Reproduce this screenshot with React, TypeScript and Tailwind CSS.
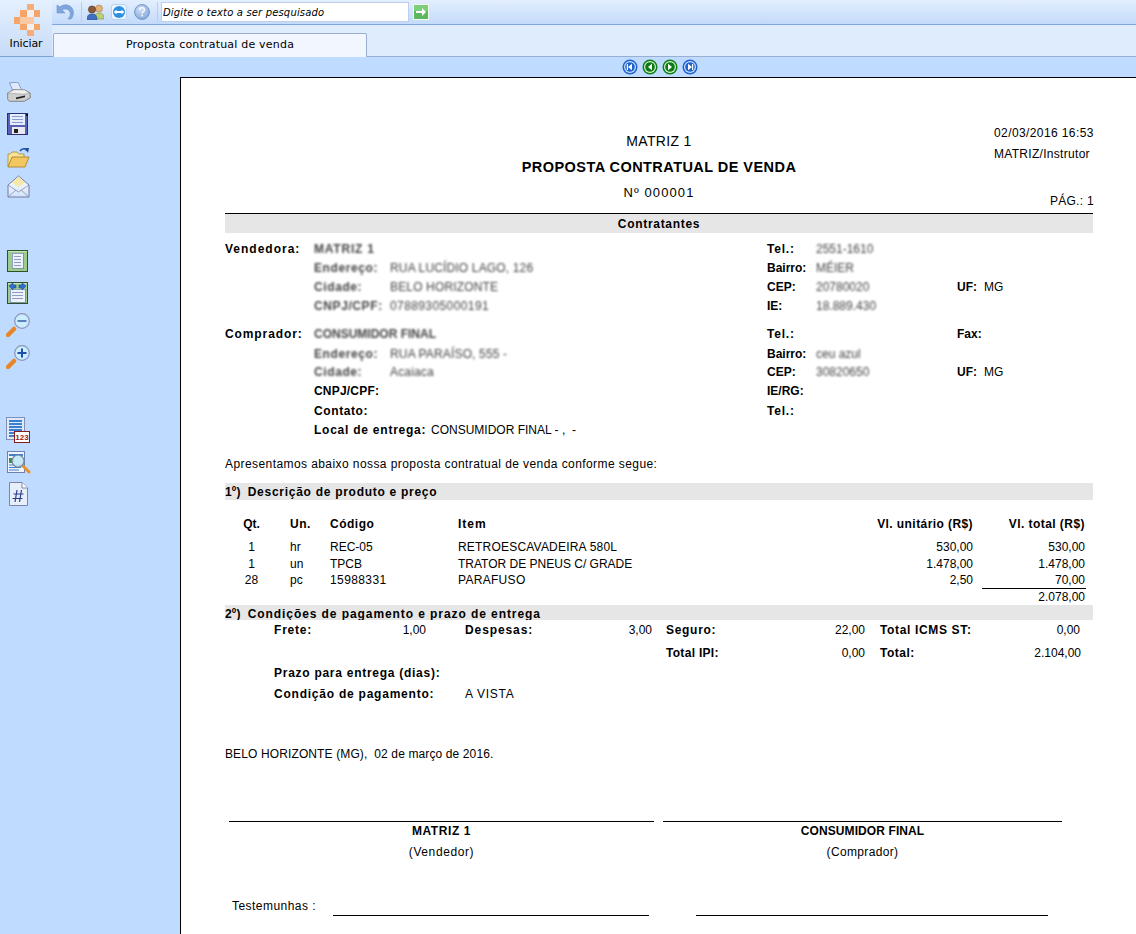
import React from "react";

const F = "[font-family:'Liberation_Sans',Arial,sans-serif]";

function Blur({ children, className = "" }: { children: React.ReactNode; className?: string }) {
  return <span className={`blur-[1px] text-[#444] whitespace-nowrap ${className}`}>{children}</span>;
}

const Logo = () => (
  <svg width="26" height="32" viewBox="0 0 26 32" shapeRendering="crispEdges">
    <g fill="#f6a468">
      <rect x="13" y="0" width="7" height="6" fill="#f8ad78" />
      <rect x="6" y="6" width="7" height="7" />
      <rect x="20" y="6" width="6" height="7" />
      <rect x="0" y="13" width="6" height="7" />
      <rect x="6" y="20" width="7" height="6" />
      <rect x="20" y="20" width="6" height="6" />
      <rect x="13" y="26" width="7" height="6" fill="#f8ad78" />
    </g>
    <g fill="#fbe1cd">
      <rect x="13" y="6" width="7" height="7" fill="#eef0f2" />
      <rect x="6" y="13" width="14" height="7" fill="#f9c9a6" />
      <rect x="13" y="20" width="7" height="6" fill="#eef0f2" />
    </g>
  </svg>
);

const Undo = () => (
  <svg width="18" height="18" viewBox="0 0 18 18">
    <path d="M1 2v8h8L6 7c3-2 7-1 8 2 1 2 0 5-2 7h3c3-3 3-8 1-11-3-4-9-4-12-1z" fill="#7ea6dc" stroke="#6d95cf" strokeWidth=".6" />
  </svg>
);
const People = () => (
  <svg width="17" height="16" viewBox="0 0 17 16">
    <circle cx="12" cy="4.5" r="3.5" fill="#e2b27a" stroke="#a67c3f" strokeWidth=".6" />
    <path d="M7 15c0-5 2-6 5-6s5 1 5 6z" fill="#b9cf72" stroke="#81964a" strokeWidth=".6" />
    <circle cx="5" cy="5.500" r="3.600" fill="#8a5a3a" stroke="#4b3424" strokeWidth=".6" />
    <path d="M0 16c0-5 2-6 5-6s5 1 5 6z" fill="#3e6fc0" stroke="#2a4a86" strokeWidth=".6" />
  </svg>
);
const TV = () => (
  <svg width="16" height="16" viewBox="0 0 16 16">
    <rect x=".5" y=".5" width="15" height="15" rx="2.5" fill="#eef6ff" stroke="#b5d2f2" />
    <circle cx="8" cy="8" r="6" fill="#2d8fe0" />
    <rect x="3.500" y="7" width="9" height="2" fill="#fff" />
    <path d="M3 8l2.500-2.500v5zM13 8l-2.500-2.500v5z" fill="#fff" />
  </svg>
);
const Help = () => (
  <svg width="16" height="16" viewBox="0 0 16 16">
    <defs>
      <radialGradient id="hg" cx=".4" cy=".3" r=".8">
        <stop offset="0" stopColor="#cfe0f6" />
        <stop offset="1" stopColor="#7ea3d8" />
      </radialGradient>
    </defs>
    <circle cx="8" cy="8" r="7.400" fill="url(#hg)" stroke="#6f94c8" />
    <path d="M5.700 6c0-3 4.800-3 4.800-.2 0 1.800-2.300 1.800-2.300 3.700" fill="none" stroke="#fff" strokeWidth="1.300" />
    <rect x="7.500" y="10.800" width="1.500" height="1.600" fill="#fff" />
  </svg>
);
const Go = () => (
  <svg width="16" height="16" viewBox="0 0 16 16" shapeRendering="crispEdges">
    <rect width="16" height="16" fill="#f2f8ee" />
    <rect x="1" y="1" width="14" height="14" fill="#5cb85c" />
    <rect x="1" y="1" width="14" height="6" fill="#7fcf7a" />
    <path d="M3 7h6V4l4 4-4 4V9H3z" fill="#fff" shapeRendering="auto" />
  </svg>
);

const Nav = ({ color, dir, bar }: { color: "blue" | "green"; dir: "l" | "r"; bar?: boolean }) => {
  const o = color === "blue" ? "#1f5fd0" : "#0f7d16";
  const i = color === "blue" ? "#1f63cc" : "#0d7a14";
  const ring = color === "blue" ? "#cfe4ff" : "#d9f2d2";
  return (
    <svg width="16" height="16" viewBox="0 0 16 16">
      <circle cx="8" cy="8" r="7.500" fill={o} />
      <circle cx="8" cy="8" r="6" fill={ring} />
      <circle cx="8" cy="8" r="4.800" fill={i} />
      {dir === "l" ? <path d="M10 4.800v6.400L6 8z" fill="#fff" /> : <path d="M6 4.800v6.400L10 8z" fill="#fff" />}
      {bar && <rect x={dir === "l" ? 4.800 : 10} y="5" width="1.200" height="6" fill="#fff" />}
    </svg>
  );
};

const Printer = () => (
  <svg width="24" height="20" viewBox="0 0 24 20">
    <path d="M2.500.800L11 .3 15 8.500 6 9z" fill="#dfeafb" stroke="#7f96bd" strokeWidth=".9" />
    <path d="M.7 11l6-3.500 10.500.3 6 3.200v5l-6 3.300H2.500L.7 17.500z" fill="#cfcfcf" stroke="#6f6f6f" strokeWidth=".8" />
    <path d="M.7 11l16 1.200 6-1-5.500-3.400H7z" fill="#f1f1f1" stroke="#888" strokeWidth=".5" />
    <path d="M9 15.500l9-2v1.800l-9 2z" fill="#222" />
  </svg>
);
const Save = () => (
  <svg width="22" height="22" viewBox="0 0 22 22" shapeRendering="crispEdges">
    <rect x=".5" y=".5" width="20" height="21" fill="#5a5fb8" stroke="#2c2f7a" />
    <rect x="3" y="1" width="15" height="11" fill="#e4eefc" />
    <rect x="5" y="3" width="11" height="1" fill="#8a9ad0" />
    <rect x="5" y="6" width="11" height="1" fill="#8a9ad0" />
    <rect x="5" y="9" width="11" height="1" fill="#8a9ad0" />
    <rect x="5" y="14" width="13" height="7" fill="#e8e8ee" />
    <rect x="7" y="16" width="4" height="4" fill="#222" />
    <rect x="19" y="1" width="2" height="2" fill="#111" />
  </svg>
);
const Folder = () => (
  <svg width="23" height="21" viewBox="0 0 23 21">
    <path d="M1 20V7h2l2-2h5l2 2h5v3" fill="#f7e398" stroke="#a98a2a" strokeWidth=".8" />
    <path d="M1 20l4-10h17l-4 10z" fill="#f3c75f" stroke="#a37c1d" strokeWidth=".8" />
    <path d="M13 4c2-3 6-3 7 0" fill="none" stroke="#1f4fa8" strokeWidth="1.500" />
    <path d="M18 1l4 0-1 5z" fill="#1f4fa8" />
  </svg>
);
const Mail = () => (
  <svg width="23" height="23" viewBox="0 0 23 23">
    <defs>
      <linearGradient id="mg" x1="0" y1="0" x2="0" y2="1">
        <stop offset="0" stopColor="#ffffff" />
        <stop offset="1" stopColor="#cfe3f8" />
      </linearGradient>
    </defs>
    <path d="M1 10L11.500 1 22 10v12H1z" fill="url(#mg)" stroke="#7779a8" strokeWidth="1" />
    <path d="M5 7.500l6.500-5.500L18 7.500l-6.500 4.500z" fill="#f5e9a8" />
    <path d="M1 10l10.500 7L22 10M1 22l8-7M22 22l-8-7" fill="none" stroke="#8a8cb6" strokeWidth=".8" />
  </svg>
);
const GreenDoc = ({ arrows }: { arrows?: boolean }) => (
  <svg width="21" height="22" viewBox="0 0 21 22" shapeRendering="crispEdges">
    <rect x=".5" y=".5" width="20" height="21" fill="#9ccb8c" stroke="#2f4f2f" />
    <rect x="1" y="1" width="19" height="1" fill="#c6e3ba" />
    <rect x={arrows ? 3 : 5} y={arrows ? 7 : 3} width={arrows ? 15 : 11} height={arrows ? 13 : 15} fill="#eef2fa" stroke="#6a7fa8" strokeWidth=".7" />
    {(arrows ? [10, 13, 16] : [6, 9, 12, 15]).map((y) => (
      <rect key={y} x={arrows ? 5 : 7} y={y} width={arrows ? 11 : 7} height="1" fill="#8c9cc0" />
    ))}
    {arrows && (
      <g shapeRendering="auto">
        <path d="M2 4l4-3v2h3v3H6v2z" fill="#2f6fd0" stroke="#15408a" strokeWidth=".5" />
        <path d="M19 4l-4-3v2h-3v3h3v2z" fill="#2f6fd0" stroke="#15408a" strokeWidth=".5" />
      </g>
    )}
  </svg>
);
const Zoom = ({ plus }: { plus?: boolean }) => (
  <svg width="25" height="24" viewBox="0 0 25 24">
    <path d="M2 22l6-6" stroke="#e8862a" strokeWidth="4.500" strokeLinecap="round" />
    <circle cx="16" cy="8" r="7.300" fill="#cbeeff" stroke="#8d93b8" strokeWidth="1.200" />
    <rect x="11.500" y="7" width="9" height="2" fill={plus ? "#1f4fa8" : "#5b7fb8"} />
    {plus && <rect x="15" y="3.500" width="2" height="9" fill="#1f4fa8" />}
  </svg>
);
const Num = () => (
  <svg width="24" height="26" viewBox="0 0 24 26" shapeRendering="crispEdges">
    <rect x=".5" y=".5" width="18" height="22" fill="#dfe9f8" stroke="#7f8fb8" />
    {[3, 6, 9, 12, 15, 18].map((y) => (
      <rect key={y} x="3" y={y} width="13" height="1.500" fill="#3a80d0" />
    ))}
    <rect x="8.500" y="14.500" width="15" height="11" fill="#fff" stroke="#8b1a1a" />
    <text x="16" y="23" textAnchor="middle" fontSize="8" fontWeight="700" fill="#a01818" fontFamily="Liberation Sans">123</text>
  </svg>
);
const Preview = () => (
  <svg width="24" height="23" viewBox="0 0 24 23">
    <rect x=".5" y=".5" width="17" height="21" fill="#f0f5fd" stroke="#6f7fb0" />
    <rect x="2" y="3" width="14" height="2" fill="#3a80d0" />
    <rect x="2" y="7" width="5" height="5" fill="#3a9040" />
    <path d="M2 14h12M2 16.500h12M2 19h10" stroke="#3a80d0" strokeWidth="1" />
    <path d="M15 14l7 7" stroke="#e8922c" strokeWidth="3" strokeLinecap="round" />
    <circle cx="11" cy="10" r="6" fill="#bfe8f6" fillOpacity=".9" stroke="#7a8a9a" strokeWidth="1.200" />
  </svg>
);
const Hash = () => (
  <svg width="19" height="24" viewBox="0 0 19 24">
    <path d="M.5.500H13L18.500 6v17.500H.5z" fill="#e6effa" stroke="#7a86a8" />
    <path d="M13 .5V6h5.500" fill="#fff" stroke="#7a86a8" />
    <path d="M8 8L6 20M12.500 8l-2 12M4.500 12h10M3.500 16.500h10" stroke="#2a3f8f" strokeWidth="1.200" fill="none" />
  </svg>
);

const COLS = "grid grid-cols-[89px_76px_377px_49px_141px_27px_1fr]";

function PartyRow({ h, a, b, c, d, e, f, aTrack }: { h: string; a?: React.ReactNode; b?: React.ReactNode; c?: React.ReactNode; d?: React.ReactNode; e?: React.ReactNode; f?: React.ReactNode; aTrack?: string }) {
  return (
    <div className={`${COLS} items-center ${h}`}>
      <span className={`font-bold ${aTrack ?? ""}`}>{a}</span>
      <span className="col-span-2 flex whitespace-nowrap">{b}</span>
      <span className="font-bold whitespace-nowrap">{c}</span>
      <span className="whitespace-nowrap">{d}</span>
      <span className="font-bold whitespace-nowrap">{e}</span>
      <span className="whitespace-nowrap">{f}</span>
    </div>
  );
}

const Tel = () => <span className="tracking-[0.8px]">Tel.:</span>;

const Pair = ({ k, v, track }: { k: string; v?: string; track?: string }) => (
  <>
    <span className="w-[76px] inline-block">
      <Blur className="font-bold tracking-[0.6px]">{k}</Blur>
    </span>
    {v && <Blur className={track ?? "tracking-[0.15px]"}>{v}</Blur>}
  </>
);

const PROD = "grid grid-cols-[18px_17px_30px_40px_128px_342px_173px_112px] items-center";

function ProdRow({ h, q, u, c, i, v, t, track, itemTrack }: { h: string; q: string; u: string; c: string; i: string; v: string; t: string; track?: string; itemTrack?: string }) {
  return (
    <div className={`${PROD} ${h}`}>
      <span />
      <span className="text-center">{q}</span>
      <span />
      <span>{u}</span>
      <span className={track}>{c}</span>
      <span className={itemTrack}>{i}</span>
      <span className="text-right">{v}</span>
      <span className="text-right">{t}</span>
    </div>
  );
}

export default function App() {
  return (
    <div className="w-[1136px] h-[934px] overflow-hidden flex flex-col bg-[#bfdbff] text-black">
      {/* top chrome */}
      <div className="flex h-[57px] shrink-0 bg-[#dfecfd] border-b border-[#9aaed0]">
        <div className="w-[52px] shrink-0 flex flex-col items-center bg-gradient-to-b from-[#e4f0fe] to-[#c7dcf8] border-b border-[#7fa3d4] h-[57px]">
          <div className="mt-[4px] mb-[1px] ml-px"><Logo /></div>
          <span className="[font-family:'DejaVu_Sans',sans-serif] text-[11px] leading-[14px] tracking-[-0.1px]">Iniciar</span>
        </div>
        <div className="flex-1 flex flex-col min-w-0">
          <div className="h-[25px] shrink-0 flex items-center bg-gradient-to-b from-[#e3effe] to-[#c3daf9] border-b border-[#7fa6dc]">
            <div className="ml-[4px] w-[18px]"><Undo /></div>
            <div className="ml-[7px] w-px h-[20px] bg-[#b8cdea]" />
            <div className="ml-[5px]"><People /></div>
            <div className="ml-[7px]"><TV /></div>
            <div className="ml-[7px]"><Help /></div>
            <div className="ml-[7px] w-px h-[20px] bg-[#b8cdea]" />
            <div className="ml-[3px] w-[248px] h-[20px] bg-white border border-[#bcd0ec] flex items-center pl-px [font-family:'DejaVu_Sans',sans-serif] text-[10px] tracking-[0.16px] italic whitespace-nowrap">
              Digite o texto a ser pesquisado
            </div>
            <div className="ml-[4px]"><Go /></div>
          </div>
          <div className="flex-1 flex items-end pl-px">
            <div className="w-[314px] h-[24px] bg-[#f1f6ff] border border-b-0 border-[#9aaed0] rounded-t-[2px] -mb-px flex items-center justify-center [font-family:'DejaVu_Sans',sans-serif] text-[11px] tracking-[0.2px] relative">
              Proposta contratual de venda
            </div>
          </div>
        </div>
      </div>

      <div className="flex flex-1 min-h-0">
        {/* sidebar */}
        <div className="w-[180px] shrink-0 flex flex-col pl-[7px]">
          <div className="mt-[25px]"><Printer /></div>
          <div className="mt-[11px]"><Save /></div>
          <div className="mt-[12px]"><Folder /></div>
          <div className="mt-[7px]"><Mail /></div>
          <div className="mt-[52px]"><GreenDoc /></div>
          <div className="mt-[10px]"><GreenDoc arrows /></div>
          <div className="mt-[9px] -ml-px"><Zoom /></div>
          <div className="mt-[8px] -ml-px"><Zoom plus /></div>
          <div className="mt-[48px] -ml-px"><Num /></div>
          <div className="mt-[8px]"><Preview /></div>
          <div className="mt-[8px] ml-[2px]"><Hash /></div>
        </div>

        <div className="flex-1 min-w-0 flex flex-col">
          <div className="h-[20px] shrink-0 flex items-center justify-center gap-[4px] pl-[4px]">
            <Nav color="blue" dir="l" bar />
            <Nav color="green" dir="l" />
            <Nav color="green" dir="r" />
            <Nav color="blue" dir="r" bar />
          </div>

          {/* page */}
          <div className={`flex-1 bg-white border-l border-t border-black pl-[44px] pr-[43px] ${F} text-[12px] leading-[14px] min-h-0 overflow-hidden`}>
            <div className="grid h-[135px] grid-cols-[769px_99px]">
              <div className="col-start-1 col-end-3 row-start-1 flex flex-col items-center pt-[54px]">
                <div className="h-[18px] flex items-center text-[14px] tracking-[0.35px]">MATRIZ 1</div>
                <div className="h-[34px] flex items-center font-bold text-[14.5px] tracking-[0.45px]">PROPOSTA CONTRATUAL DE VENDA</div>
                <div className="h-[18px] flex items-center text-[13px] tracking-[1.1px]">Nº 000001</div>
              </div>
              <div className="col-start-2 row-start-1 flex flex-col pt-[47px]">
                <div className="h-[16px] flex items-center whitespace-nowrap tracking-[0.4px]">02/03/2016 16:53</div>
                <div className="h-[26px] flex items-center whitespace-nowrap tracking-[0.3px]">MATRIZ/Instrutor</div>
                <div className="h-[46px] pb-[5px] flex items-end justify-end whitespace-nowrap -mr-px tracking-[0.3px]">PÁG.: 1</div>
              </div>
            </div>
            <div className="h-px bg-black" />
            <div className="h-[19px] bg-[#e6e6e6] flex items-center justify-center font-bold tracking-[0.7px]">Contratantes</div>

            <div className="mt-[6px]">
              <PartyRow h="h-[19px]" aTrack="tracking-[1px]" a="Vendedora:" b={<Blur className="font-bold tracking-[0.8px]">MATRIZ 1</Blur>} c={<Tel />} d={<Blur>2551-1610</Blur>} />
              <PartyRow h="h-[19px]" b={<Pair k="Endereço:" v="RUA LUCÍDIO LAGO, 126" />} c="Bairro:" d={<Blur>MÉIER</Blur>} />
              <PartyRow h="h-[19px]" b={<Pair k="Cidade:" v="BELO HORIZONTE" />} c="CEP:" d={<Blur>20780020</Blur>} e="UF:" f="MG" />
              <PartyRow h="h-[19px]" b={<Pair k="CNPJ/CPF:" v="07889305000191" track="tracking-[0.4px]" />} c="IE:" d={<Blur>18.889.430</Blur>} />
              <div className="h-[9px]" />
              <PartyRow h="h-[20px]" aTrack="tracking-[0.9px]" a="Comprador:" b={<Blur className="font-bold">CONSUMIDOR FINAL</Blur>} c={<Tel />} e="Fax:" />
              <PartyRow h="h-[19px]" b={<Pair k="Endereço:" v="RUA PARAÍSO, 555 -" />} c="Bairro:" d={<Blur>ceu azul</Blur>} />
              <PartyRow h="h-[18px]" b={<Pair k="Cidade:" v="Acaiaca" />} c="CEP:" d={<Blur>30820650</Blur>} e="UF:" f="MG" />
              <PartyRow h="h-[20px]" b={<span className="font-bold tracking-[0.2px]">CNPJ/CPF:</span>} c="IE/RG:" />
              <PartyRow h="h-[19px]" b={<span className="font-bold tracking-[0.6px]">Contato:</span>} c={<Tel />} />
              <PartyRow h="h-[19px]" b={<span className="flex"><b className="tracking-[0.76px] w-[117px]">Local de entrega:</b><span className="whitespace-pre">CONSUMIDOR FINAL - ,  -</span></span>} />
            </div>

            <div className="h-[16px] mt-[17px] flex items-center tracking-[0.42px]">Apresentamos abaixo nossa proposta contratual de venda conforme segue:</div>
            <div className="h-[17px] mt-[11px] bg-[#e6e6e6] flex items-center font-bold tracking-[0.72px] whitespace-pre"><span className="tracking-[0.2px]">1º)&nbsp;&nbsp;</span>Descrição de produto e preço</div>

            <div className={`${PROD} h-[16px] mt-[16px] font-bold`}>
              <span />
              <span className="text-center">Qt.</span>
              <span />
              <span className="tracking-[0.5px]">Un.</span>
              <span className="tracking-[0.5px]">Código</span>
              <span className="tracking-[1px]">Item</span>
              <span className="text-right tracking-[0.42px]">Vl. unitário (R$)</span>
              <span className="text-right tracking-[0.45px]">Vl. total (R$)</span>
            </div>
            <div className="mt-[7px]">
              <ProdRow h="h-[16px]" q="1" u="hr" c="REC-05" i="RETROESCAVADEIRA 580L" itemTrack="tracking-[0.2px]" v="530,00" t="530,00" />
              <ProdRow h="h-[17px]" q="1" u="un" c="TPCB" i="TRATOR DE PNEUS C/ GRADE" v="1.478,00" t="1.478,00" />
              <ProdRow h="h-[15px]" q="28" u="pc" c="15988331" track="tracking-[0.4px]" i="PARAFUSO" itemTrack="tracking-[0.3px]" v="2,50" t="70,00" />
            </div>
            <div className="h-px bg-black ml-[757px] w-[104px] mt-px" />
            <div className="h-[15px] flex items-center justify-end pr-[8px] pt-[1px]">2.078,00</div>

            <div className="h-[15px] bg-[#e6e6e6] mt-[1px] pt-[2px] flex items-center font-bold tracking-[0.92px] whitespace-pre overflow-hidden"><span className="tracking-[0.2px]">2º)&nbsp;&nbsp;</span>Condições de pagamento e prazo de entrega</div>
            <div className="grid grid-cols-[49px_152px_39px_187px_14px_199px_15px_200px] font-bold items-center">
              <div className="col-span-8 grid grid-cols-subgrid h-[20px] items-center">
                <span />
                <span className="flex justify-between"><b className="tracking-[0.8px]">Frete:</b><span className="font-normal">1,00</span></span>
                <span />
                <span className="flex justify-between"><b className="tracking-[0.9px]">Despesas:</b><span className="font-normal">3,00</span></span>
                <span />
                <span className="flex justify-between"><b className="tracking-[0.7px]">Seguro:</b><span className="font-normal">22,00</span></span>
                <span />
                <span className="flex justify-between whitespace-nowrap"><b className="tracking-[0.65px]">Total ICMS ST:</b><span className="font-normal">0,00</span></span>
              </div>
              <div className="col-span-8 grid grid-cols-subgrid h-[23px] pt-[3px] items-center">
                <span className="col-span-4" />
                <span />
                <span className="flex justify-between"><b className="tracking-[0.3px]">Total IPI:</b><span className="font-normal">0,00</span></span>
                <span />
                <span className="flex justify-between"><b className="tracking-[0.5px]">Total:</b><span className="font-normal -mr-px">2.104,00</span></span>
              </div>
            </div>
            <div className="pl-[49px] h-[20px] flex items-center font-bold tracking-[0.73px]">Prazo para entrega (dias):</div>
            <div className="pl-[49px] h-[21px] flex items-center">
              <b className="w-[191px] tracking-[0.77px]">Condição de pagamento:</b>
              <span className="tracking-[0.7px]">A VISTA</span>
            </div>

            <div className="h-[16px] mt-[42px] flex items-center tracking-[0.12px]">BELO HORIZONTE (MG),&nbsp; 02 de março de 2016.</div>

            <div className="flex mt-[59px] pl-[4px] text-center">
              <div className="w-[425px] border-t border-black">
                <div className="h-[18px] flex items-center justify-center font-bold tracking-[0.6px]">MATRIZ 1</div>
                <div className="h-[24px] flex items-center justify-center tracking-[0.6px]">(Vendedor)</div>
              </div>
              <div className="w-[399px] ml-[9px] border-t border-black">
                <div className="h-[18px] flex items-center justify-center font-bold tracking-[0.1px]">CONSUMIDOR FINAL</div>
                <div className="h-[24px] flex items-center justify-center tracking-[0.35px]">(Comprador)</div>
              </div>
            </div>

            <div className="flex items-end mt-[30px] h-[22px]">
              <span className="w-[108px] pl-[7px] h-[20px] flex items-center tracking-[0.46px]">Testemunhas :</span>
              <div className="w-[316px] h-px bg-black" />
              <div className="w-[352px] h-px bg-black ml-[47px]" />
            </div>
          </div>
        </div>
      </div>
    </div>
  );
}
